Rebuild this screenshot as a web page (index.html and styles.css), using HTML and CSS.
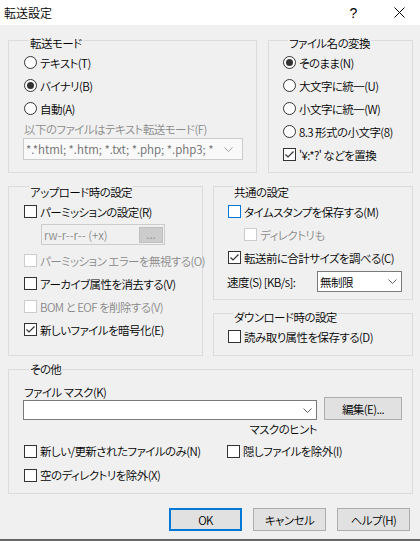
FILE: index.html
```html
<!DOCTYPE html>
<html lang="ja">
<head>
  <meta charset="UTF-8">
  <meta name="viewport" content="width=device-width, initial-scale=1.0">
  <title>転送設定</title>
  <link rel="stylesheet" href="styles.css">
</head>
<body>
  <div class="titlebar">
    <span class="title">転送設定</span>
    <span class="cap help">?</span>
    <span class="cap close">
      <svg width="11" height="11" viewBox="0 0 11 11"><path d="M0.5 0.5L10.5 10.5M10.5 0.5L0.5 10.5" stroke="#000" stroke-width="1"/></svg>
    </span>
  </div>

  <div class="dialog">
    <div class="row-top">
      <div class="group mode">
        <div class="group-title">転送モード</div>
        <div class="opt"><span class="radio"></span>テキスト(T)</div>
        <div class="opt"><span class="radio on"></span>バイナリ(B)</div>
        <div class="opt"><span class="radio"></span>自動(A)</div>
        <div class="line disabled">以下のファイルはテキスト転送モード(F)</div>
        <div class="combo combo-off">
          <span class="combo-text">*.*html; *.htm; *.txt; *.php; *.php3; *.phtml; *.shtml</span>
          <span class="combo-arrow wide"><svg width="9" height="5" viewBox="0 0 9 5"><path d="M0.5 0.5L4.5 4.5L8.5 0.5" fill="none" stroke="#a0a0a0"/></svg></span>
        </div>
      </div>

      <div class="group names">
        <div class="group-title">ファイル名の変換</div>
        <div class="opt"><span class="radio on"></span>そのまま(N)</div>
        <div class="opt"><span class="radio"></span>大文字に統一(U)</div>
        <div class="opt"><span class="radio"></span>小文字に統一(W)</div>
        <div class="opt"><span class="radio"></span>8.3 形式の小文字(8)</div>
        <div class="opt"><span class="check on"><svg width="11" height="11" viewBox="0 0 11 11"><path d="M1.5 5.5L4 8L9.5 2.5" fill="none" stroke="#333" stroke-width="1.2"/></svg></span>'¥:*?' などを置換</div>
      </div>
    </div>

    <div class="row-mid">
      <div class="group upload">
        <div class="group-title">アップロード時の設定</div>
        <div class="opt"><span class="check"></span>パーミッションの設定(R)</div>
        <div class="perm">
          <span class="perm-text">rw-r--r-- (+x)</span>
          <span class="perm-btn">...</span>
        </div>
        <div class="opt disabled gap"><span class="check off"></span>パーミッション エラーを無視する(O)</div>
        <div class="opt"><span class="check"></span>アーカイブ属性を消去する(V)</div>
        <div class="opt disabled"><span class="check off"></span>BOM と EOF を削除する(V)</div>
        <div class="opt"><span class="check on"><svg width="11" height="11" viewBox="0 0 11 11"><path d="M1.5 5.5L4 8L9.5 2.5" fill="none" stroke="#333" stroke-width="1.2"/></svg></span>新しいファイルを暗号化(E)</div>
      </div>

      <div class="side">
        <div class="group common">
          <div class="group-title">共通の設定</div>
          <div class="opt"><span class="check focus"></span>タイムスタンプを保存する(M)</div>
          <div class="opt disabled sub"><span class="check off"></span>ディレクトリも</div>
          <div class="opt"><span class="check on"><svg width="11" height="11" viewBox="0 0 11 11"><path d="M1.5 5.5L4 8L9.5 2.5" fill="none" stroke="#333" stroke-width="1.2"/></svg></span>転送前に合計サイズを調べる(C)</div>
          <div class="speed">
            <span class="speed-label">速度(S) [KB/s]:</span>
            <div class="combo speed-combo">
              <span class="combo-text">無制限</span>
              <span class="combo-arrow"><svg width="9" height="5" viewBox="0 0 9 5"><path d="M0.5 0.5L4.5 4.5L8.5 0.5" fill="none" stroke="#606060"/></svg></span>
            </div>
          </div>
        </div>

        <div class="group download">
          <div class="group-title">ダウンロード時の設定</div>
          <div class="opt"><span class="check"></span>読み取り属性を保存する(D)</div>
        </div>
      </div>
    </div>

    <div class="group other">
      <div class="group-title">その他</div>
      <div class="line">ファイル マスク(K)</div>
      <div class="mask-row">
        <div class="mask-col">
          <div class="combo mask-combo">
            <span class="combo-text"></span>
            <span class="combo-arrow"><svg width="9" height="5" viewBox="0 0 9 5"><path d="M0.5 0.5L4.5 4.5L8.5 0.5" fill="none" stroke="#606060"/></svg></span>
          </div>
          <div class="hint">マスクのヒント</div>
        </div>
        <span class="btn edit">編集(E)...</span>
      </div>
      <div class="filters">
        <div class="opt"><span class="check"></span>新しい/更新されたファイルのみ(N)</div>
        <div class="opt"><span class="check"></span>隠しファイルを除外(I)</div>
        <div class="opt"><span class="check"></span>空のディレクトリを除外(X)</div>
      </div>
    </div>

    <div class="buttons">
      <span class="btn default">OK</span>
      <span class="btn">キャンセル</span>
      <span class="btn">ヘルプ(H)</span>
    </div>
  </div>

  <div class="edge"></div>
</body>
</html>
```

FILE: styles.css
```css
body {
  margin: 0;
  background: #f0f0f0;
  font-family: "Noto Sans CJK JP", "Liberation Sans", sans-serif;
  font-size: 11.5px;
  font-weight: 350;
  letter-spacing: -0.55px;
  color: #000;
  font-feature-settings: "palt";
}

.titlebar { height: 25px; background: #fff; display: flex; align-items: center; }
.title { flex: 1; padding-left: 4px; font-size: 12px; letter-spacing: 0; }
.cap { width: 46px; text-align: center; font-family: "Liberation Sans", sans-serif; font-size: 14px; }
.help { margin-right: 3px; }
.close { width: 41px; display: flex; justify-content: center; }

.dialog { padding: 15px 7px 0 8px; }

.group { border: 1px solid #dcdcdc; box-sizing: border-box; }
.group-title {
  display: table;
  margin: -9px 0 0 5px;
  padding: 0 1px;
  background: #f0f0f0;
  line-height: 16px;
}

.opt { display: flex; align-items: center; height: 23px; white-space: nowrap; }
.line { line-height: 16px; white-space: nowrap; }
.disabled { color: #8a8a8a; }

.radio, .check {
  width: 13px;
  height: 13px;
  box-sizing: border-box;
  border: 1px solid #333;
  background: #fff;
  margin-right: 3px;
  flex: none;
  display: flex;
  align-items: center;
  justify-content: center;
}
.radio { border-radius: 50%; }
.radio.on::after { content: ""; width: 7px; height: 7px; border-radius: 50%; background: #333; }
.check.off { border-color: #cccccc; }
.check.focus { border-color: #0078d7; }

.combo {
  display: flex;
  align-items: center;
  box-sizing: border-box;
  border: 1px solid #7a7a7a;
  background: #fff;
}
.combo-text { flex: 1; padding-left: 2px; overflow: hidden; white-space: nowrap; }
.combo-arrow { width: 18px; display: flex; justify-content: center; flex: none; }
.combo-arrow.wide { width: 28px; }

/* row 1 */
.row-top { display: flex; gap: 11px; height: 133px; }
.mode { width: 249px; padding: 3px 0 0 15px; }
.names { width: 145px; padding: 3px 0 0 14px; }
.mode .line { margin-top: 1px; }
.combo-off {
  margin: 1px 0 0 -1px;
  width: 220px;
  height: 22px;
  border-color: #cccccc;
  background: #f9f9f9;
  color: #6d6d6d;
  letter-spacing: 0;
}

/* row 2 */
.row-mid { display: flex; gap: 10px; margin-top: 13px; }
.upload { width: 195px; height: 170px; padding: 6px 0 0 15px; }
.perm {
  display: flex;
  align-items: center;
  margin: 1px 0 0 17px;
  width: 124px;
  height: 21px;
  box-sizing: border-box;
  border: 1px solid #cccccc;
  background: #f0f0f0;
  color: #8a8a8a;
  letter-spacing: 0;
}
.perm-text { flex: 1; padding-left: 2px; }
.perm-btn {
  width: 24px;
  height: 16px;
  margin-right: 1px;
  box-sizing: border-box;
  border: 1px solid #bfbfbf;
  background: #cccccc;
  color: #8a8a8a;
  text-align: center;
  line-height: 12px;
}
.gap { margin-top: 4px; }

.side { width: 200px; display: flex; flex-direction: column; gap: 13px; }
.common { height: 114px; padding: 6px 0 0 14px; }
.sub { padding-left: 16px; }
.speed { display: flex; align-items: center; margin-top: 2px; height: 21px; }
.speed-label { width: 90px; margin-left: -1px; white-space: nowrap; }
.speed-combo { width: 85px; height: 21px; }
.download { height: 43px; padding: 4px 0 0 14px; }

/* row 3 */
.other { margin-top: 13px; height: 125px; padding: 0 0 0 15px; }
.other .line { margin-top: 7px; }
.mask-row { display: flex; align-items: flex-start; }
.mask-col { width: 294px; margin-left: -1px; }
.mask-combo { height: 20px; }
.hint { text-align: right; line-height: 16px; margin-top: 1px; }
.filters { display: grid; grid-template-columns: 203px 1fr; grid-auto-rows: 24px; margin-top: 2px; }
.filters .opt { height: 24px; }

.btn {
  width: 73px;
  height: 23px;
  box-sizing: border-box;
  border: 1px solid #adadad;
  background: #e1e1e1;
  display: flex;
  align-items: center;
  justify-content: center;
  white-space: nowrap;
}
.btn.default { border: 2px solid #0078d7; }
.edit { width: 78px; margin: -3px 0 0 7px; }

.buttons { display: flex; justify-content: flex-end; gap: 11px; margin-top: 14px; padding-right: 3px; }
.edge { height: 2px; margin-top: 8px; background: #666; }
```
